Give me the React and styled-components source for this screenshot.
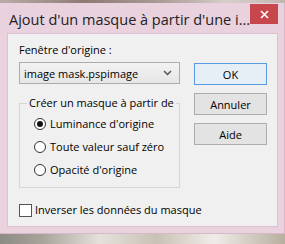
import React from "react";
import styled, {createGlobalStyle} from "styled-components";

const Global = createGlobalStyle`
  html, body { margin: 0; padding: 0; }
  body {
    width: 285px;
    height: 244px;
    overflow: hidden;
    font-family: "Open Sans", "Noto Sans", sans-serif;
  }
`

const Desk = styled.div`
  width: 285px;
  height: 244px;
  padding-top: 3px;
  box-sizing: border-box;
  background:
    linear-gradient(90deg, #b9aca8 0%, #8f7a74 30%, #a99893 55%, #d7cfcb 80%, #c2b5b0 100%) top / 100% 3px no-repeat,
    linear-gradient(90deg, #8d8b86 0%, #a9a49b 15%, #e4e1dc 35%, #c9c1b4 55%, #efece8 75%, #b8ae9e 100%);
`

const Window = styled.div`
  height: 231px;
  background: #e9d1de;
  border-right: 1px solid #d6b8c8;
  border-bottom: 1px solid #d6b8c8;
  box-sizing: border-box;
  display: flex;
  flex-direction: column;
`

const TitleBar = styled.div`
  height: 30px;
  display: flex;
  align-items: flex-start;
  justify-content: space-between;
  padding-left: 9px;
  padding-right: 6px;
`

const Title = styled.div`
  font-size: 14.5px;
  color: #222;
  line-height: 20px;
  margin-top: 7px;
  white-space: nowrap;
`

const CloseBtn = styled.div`
  width: 31px;
  height: 20px;
  margin-top: 1px;
  background: #c7474c;
  display: flex;
  align-items: center;
  justify-content: center;
`

const Client = styled.div`
  margin: 0 6px 0 7px;
  height: 194px;
  background: #f0f0f0;
  border: 1px solid #dcc2d0;
  box-sizing: border-box;
  display: flex;
  padding: 0 9px 0 11px;
  gap: 14px;
  color: #000;
  font-size: 11px;
  white-space: nowrap;
`

const LeftCol = styled.div`
  width: 161px;
  display: flex;
  flex-direction: column;
`

const Label = styled.div`
  margin-top: 8px;
  line-height: 16px;
`

const Select = styled.div`
  margin-top: 4px;
  height: 22px;
  box-sizing: border-box;
  border: 1px solid #acacac;
  background: linear-gradient(#f2f2f2, #e6e6e6);
  display: flex;
  align-items: center;
  justify-content: space-between;
  padding: 0 7px 0 4px;
`

const Group = styled.fieldset`
  margin: 11px 0 0;
  padding: 5px 0 0 14px;
  height: 93px;
  box-sizing: border-box;
  border: 1px solid #d5d5d5;
  display: flex;
  flex-direction: column;
  gap: 7px;
`

const Legend = styled.legend`
  padding: 0 2px;
  margin-left: -7px;
  line-height: 16px;
`

const Option = styled.div`
  display: flex;
  align-items: center;
  gap: 4px;
  line-height: 16px;
`

const Radio = styled.span`
  width: 12px;
  height: 12px;
  box-sizing: border-box;
  border-radius: 50%;
  border: 1px solid #333;
  background: #fff;
  display: flex;
  align-items: center;
  justify-content: center;
  &::after {
    content: "";
    width: 6px;
    height: 6px;
    border-radius: 50%;
    background: ${p => (p.$on ? "#111" : "transparent")};
  }
`

const CheckRow = styled(Option)`
  margin-top: 14px;
  gap: 3px;
`

const Box = styled.span`
  width: 13px;
  height: 13px;
  flex-shrink: 0;
  box-sizing: border-box;
  border: 1px solid #555;
  background: #fff;
`

const RightCol = styled.div`
  width: 73px;
  flex-shrink: 0;
  padding-top: 29px;
  display: flex;
  flex-direction: column;
  gap: 8px;
`

const Button = styled.div`
  height: 22px;
  box-sizing: border-box;
  border: 1px solid ${p => (p.$main ? "#5a9be0" : "#adadad")};
  background: ${p => (p.$main ? "#e6eef6" : "#e3e3e3")};
  display: flex;
  align-items: center;
  justify-content: center;
`

export default function App() {
    return (
        <Desk>
            <Global/>
            <Window>
                <TitleBar>
                    <Title>Ajout d'un masque à partir d'une i...</Title>
                    <CloseBtn>
                        <svg width="9" height="9" viewBox="0 0 9 9">
                            <path d="M1 1L8 8M8 1L1 8" stroke="#fff" strokeWidth="1.6"/>
                        </svg>
                    </CloseBtn>
                </TitleBar>
                <Client>
                    <LeftCol>
                        <Label>Fenêtre d'origine :</Label>
                        <Select>
                            <span>image mask.pspimage</span>
                            <svg width="9" height="6" viewBox="0 0 9 6">
                                <path d="M1 1L4.5 4.5L8 1" fill="none" stroke="#555" strokeWidth="1.5"/>
                            </svg>
                        </Select>
                        <Group>
                            <Legend>Créer un masque à partir de</Legend>
                            <Option><Radio $on/>Luminance d'origine</Option>
                            <Option><Radio/>Toute valeur sauf zéro</Option>
                            <Option><Radio/>Opacité d'origine</Option>
                        </Group>
                        <CheckRow><Box/>Inverser les données du masque</CheckRow>
                    </LeftCol>
                    <RightCol>
                        <Button $main>OK</Button>
                        <Button>Annuler</Button>
                        <Button>Aide</Button>
                    </RightCol>
                </Client>
            </Window>
        </Desk>
    )
}
